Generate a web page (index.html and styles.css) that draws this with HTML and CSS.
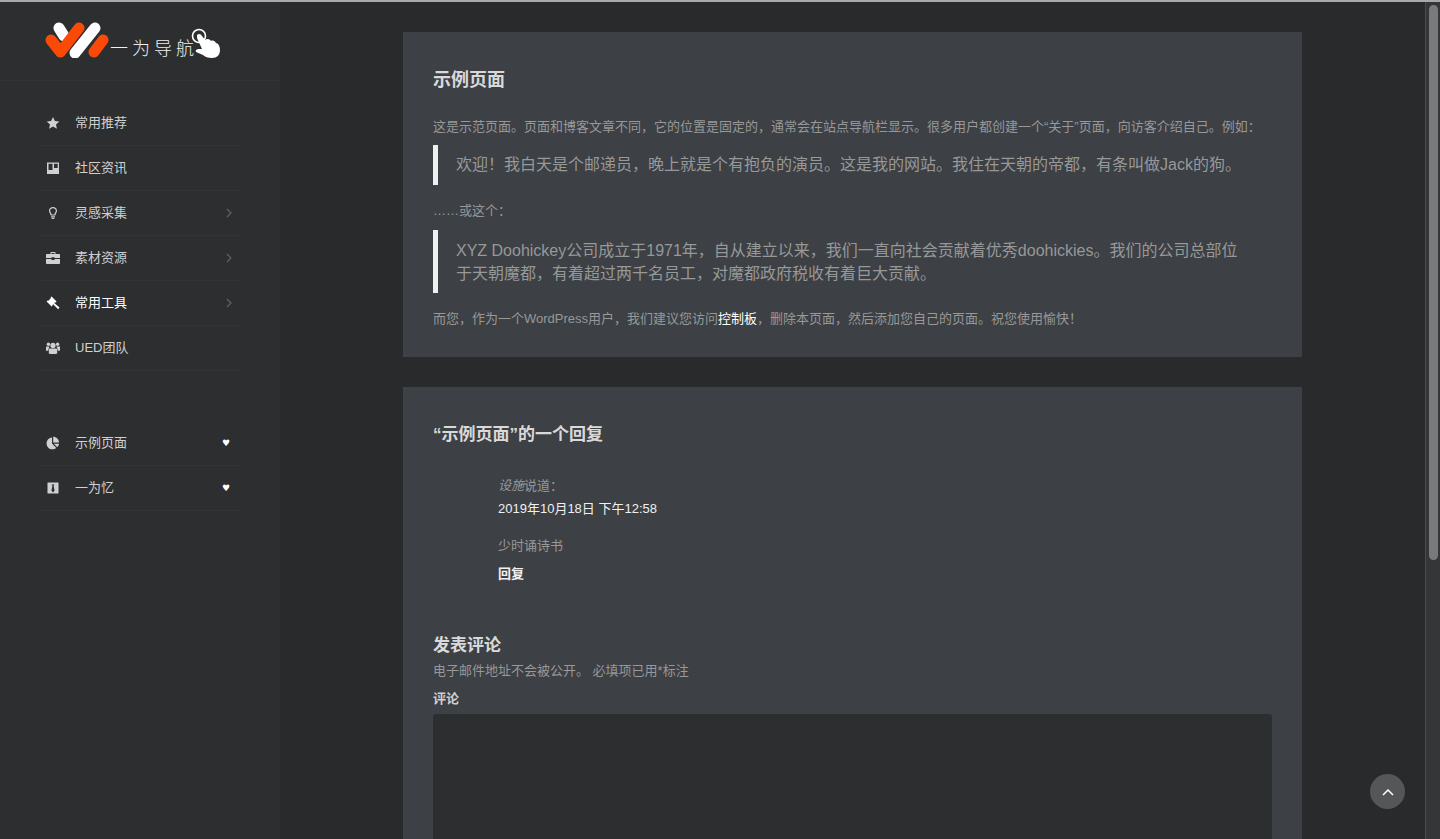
FILE: index.html
```html
<!DOCTYPE html>
<html lang="zh-CN">
<head>
    <meta charset="UTF-8">
    <meta name="viewport" content="width=device-width, initial-scale=1.0">
    <title>示例页面 - 一为导航</title>
    <link rel="stylesheet" href="styles.css">
</head>
<body>
    <div class="top-line"></div>
    <div class="page">
        <aside class="sidebar">
            <div class="logo">
                <svg class="logo-mark" viewBox="0 0 64 36" width="64" height="36">
                    <path class="logo-white" d="M14 6 L19 14"/>
                    <path class="logo-orange" d="M6 18 L15.5 30 L34 6"/>
                    <path class="logo-white" d="M30 31 L50 6"/>
                    <path class="logo-orange" d="M49 30 L58 18"/>
                </svg>
                <span class="logo-text">一为导航</span>
                <svg class="logo-hand" viewBox="0 0 32 32" width="32" height="32">
                    <circle class="hand-ring" cx="9" cy="8" r="6.5"/>
                    <path d="M7 7 C9 5 11 6 12 8 L15 12 C17 10 20 11 21 13 C23 12 25 13 26 15 C28 15 30 18 30 22 C30 27 27 30 22 30 C18 30 15 29 13 27 L6 24 C5 22 7 21 9 21 L12 21 L7 10 Z"/>
                </svg>
            </div>
            <ul class="nav">
                <li class="nav-item">
                    <svg class="nav-icon" viewBox="0 0 14 14"><path d="M7 1 L8.9 5 L13.3 5.5 L10 8.4 L10.9 12.8 L7 10.6 L3.1 12.8 L4 8.4 L.7 5.5 L5.1 5 Z"/></svg>
                    <span class="nav-label">常用推荐</span>
                </li>
                <li class="nav-item">
                    <svg class="nav-icon" viewBox="0 0 14 14"><path fill-rule="evenodd" d="M1 1.5 H13 V13 H1 Z M2.5 2.8 V9 H6.5 V2.8 Z M8 2.8 V7 H11.7 V2.8 Z"/></svg>
                    <span class="nav-label">社区资讯</span>
                </li>
                <li class="nav-item">
                    <svg class="nav-icon" viewBox="0 0 14 14"><path fill-rule="evenodd" d="M7 1 C9.6 1 11 2.8 11 4.8 C11 6.6 9.7 7.5 9.3 9.6 H4.7 C4.3 7.5 3 6.6 3 4.8 C3 2.8 4.4 1 7 1 Z M7 2.2 C5.2 2.2 4.2 3.4 4.2 4.8 C4.2 6 5.2 6.9 5.7 8.5 H8.3 C8.8 6.9 9.8 6 9.8 4.8 C9.8 3.4 8.8 2.2 7 2.2 Z M5 10.3 H9 V11.5 H5 Z M5.7 12 H8.3 V13 H5.7 Z"/></svg>
                    <span class="nav-label">灵感采集</span>
                    <svg class="nav-arrow" viewBox="0 0 6 10" width="6" height="10"><path d="M1 1 L5 5 L1 9"/></svg>
                </li>
                <li class="nav-item">
                    <svg class="nav-icon" viewBox="0 0 14 14"><path fill-rule="evenodd" d="M4.5 3 V1.8 C4.5 1.3 4.9 1 5.3 1 H8.7 C9.1 1 9.5 1.3 9.5 1.8 V3 H13 C13.5 3 14 3.4 14 4 V7 H8.5 V6.2 H5.5 V7 H0 V4 C0 3.4 .5 3 1 3 Z M5.5 3 H8.5 V2 H5.5 Z M0 8 H5.5 V9 H8.5 V8 H14 V12 C14 12.6 13.5 13 13 13 H1 C.5 13 0 12.6 0 12 Z"/></svg>
                    <span class="nav-label">素材资源</span>
                    <svg class="nav-arrow" viewBox="0 0 6 10" width="6" height="10"><path d="M1 1 L5 5 L1 9"/></svg>
                </li>
                <li class="nav-item is-active">
                    <svg class="nav-icon" viewBox="0 0 14 14"><path d="M5.6 .6 L6.6 1.6 L10.6 5.6 L9.6 6.6 L8.9 6.4 L8.2 7.1 L13.5 11.4 L12.2 13.2 L7.1 8.2 L6.4 8.9 L6.6 9.6 L5.6 10.6 L.6 5.6 L1.6 4.6 L2.3 4.8 L4.8 2.3 L4.6 1.6 Z"/></svg>
                    <span class="nav-label">常用工具</span>
                    <svg class="nav-arrow" viewBox="0 0 6 10" width="6" height="10"><path d="M1 1 L5 5 L1 9"/></svg>
                </li>
                <li class="nav-item">
                    <svg class="nav-icon" viewBox="0 0 14 14"><circle cx="7" cy="4.4" r="2.6"/><circle cx="2.4" cy="3.2" r="1.7"/><circle cx="11.6" cy="3.2" r="1.7"/><path d="M3.6 7.6 H10.4 C11 7.6 11.2 8.6 11.2 9.6 V12.4 C10 13.2 4 13.2 2.8 12.4 V9.6 C2.8 8.6 3 7.6 3.6 7.6 Z M0 5.6 H3.4 L2 9.8 H0 Z M14 5.6 H10.6 L12 9.8 H14 Z"/></svg>
                    <span class="nav-label">UED团队</span>
                </li>
            </ul>
            <ul class="nav nav-second">
                <li class="nav-item">
                    <svg class="nav-icon" viewBox="0 0 14 14"><path d="M6 1.6 V7.6 L10.3 11.9 C9.2 12.8 7.8 13.3 6.4 13.3 C3.2 13.3 .6 10.7 .6 7.4 C.6 4.4 3 1.8 6 1.6 Z M7.2 .8 C10.4 .8 13 3.4 13 6.6 H7.2 Z M7.8 7.8 H13 C12.8 9 12.3 10.2 11.3 11.2 Z"/></svg>
                    <span class="nav-label">示例页面</span>
                    <span class="nav-heart">♥</span>
                </li>
                <li class="nav-item">
                    <svg class="nav-icon" viewBox="0 0 14 14"><path fill-rule="evenodd" d="M1.5 1.5 H12.5 V12.5 H1.5 Z M5.6 3.4 L6.4 5 L5.4 9.6 L7 11.4 L8.6 9.6 L7.6 5 L8.4 3.4 Z"/></svg>
                    <span class="nav-label">一为忆</span>
                    <span class="nav-heart">♥</span>
                </li>
            </ul>
        </aside>

        <main class="main">
            <section class="card">
                <h1 class="card-title">示例页面</h1>
                <p class="lead">这是示范页面。页面和博客文章不同，它的位置是固定的，通常会在站点导航栏显示。很多用户都创建一个“关于”页面，向访客介绍自己。例如：</p>
                <blockquote>欢迎！我白天是个邮递员，晚上就是个有抱负的演员。这是我的网站。我住在天朝的帝都，有条叫做Jack的狗。</blockquote>
                <p>……或这个：</p>
                <blockquote>XYZ Doohickey公司成立于1971年，自从建立以来，我们一直向社会贡献着优秀doohickies。我们的公司总部位于天朝魔都，有着超过两千名员工，对魔都政府税收有着巨大贡献。</blockquote>
                <p class="last">而您，作为一个WordPress用户，我们建议您访问<a class="link" href="#">控制板</a>，删除本页面，然后添加您自己的页面。祝您使用愉快！</p>
            </section>

            <section class="card">
                <h2 class="card-title card-title-small">“示例页面”的一个回复</h2>
                <div class="comment">
                    <div class="comment-author"><em>设施</em>说道：</div>
                    <div class="comment-date">2019年10月18日 下午12:58</div>
                    <div class="comment-text">少时诵诗书</div>
                    <a class="comment-reply" href="#">回复</a>
                </div>
                <h3 class="form-title">发表评论</h3>
                <div class="form-note">电子邮件地址不会被公开。 必填项已用*标注</div>
                <label class="form-label">评论</label>
                <div class="form-textarea"></div>
            </section>
        </main>

        <div class="scrollbar"><div class="scrollbar-thumb"></div></div>
    </div>

    <a class="back-top" href="#">
        <svg viewBox="0 0 12 8" width="12" height="8"><path d="M1 7 L6 2 L11 7"/></svg>
    </a>
</body>
</html>
```

FILE: styles.css
```css
* {
    box-sizing: border-box;
}
html, body {
    height: 100%;
}
body {
    margin: 0;
    overflow: hidden;
    display: flex;
    flex-direction: column;
    background: #282a2b;
    color: #979898;
    font-family: "Liberation Sans", "Noto Sans CJK SC", sans-serif;
    font-size: 13px;
    line-height: 18.57px;
}
a {
    text-decoration: none;
}
.top-line {
    height: 2px;
    flex: none;
    background: #a9a9a9;
}
.page {
    flex: 1;
    min-height: 0;
    display: flex;
}

/* sidebar */
.sidebar {
    width: 280px;
    flex: none;
    background: #2c2e2f;
}
.logo {
    height: 79px;
    display: flex;
    align-items: flex-start;
    padding: 20px 0 0 45px;
    border-bottom: 1px solid #313334;
}
.logo-mark {
    flex: none;
}
.logo-mark path {
    fill: none;
    stroke-width: 11;
    stroke-linecap: round;
    stroke-linejoin: round;
}
.logo-orange {
    stroke: #fb4a07;
}
.logo-white {
    stroke: #fff;
}
.logo-text {
    color: #f0f0f0;
    font-size: 18px;
    font-weight: 300;
    letter-spacing: 4px;
    line-height: 24px;
    margin: 15px 0 0 1px;
    white-space: nowrap;
}
.logo-hand {
    flex: none;
    fill: #fff;
    margin: 6px 0 0 -8px;
}
.hand-ring {
    fill: none;
    stroke: #fff;
    stroke-width: 1.6;
}
.nav {
    list-style: none;
    margin: 0;
    padding: 20px 40px 0;
}
.nav-second {
    padding-top: 50px;
}
.nav-item {
    height: 45px;
    display: flex;
    align-items: center;
    padding-left: 6px;
    border-bottom: 1px solid #313334;
    color: #d0d0d0;
}
.nav-item.is-active {
    color: #fff;
}
.nav-icon {
    width: 14px;
    height: 14px;
    flex: none;
    fill: currentColor;
    margin-right: 15px;
}
.nav-label {
    flex: 1;
}
.nav-arrow {
    fill: none;
    stroke: #5f6162;
    stroke-width: 1.2;
    margin-right: 8px;
}
.nav-heart {
    color: #fff;
    font-family: "DejaVu Sans", sans-serif;
    font-size: 9px;
    margin-right: 10px;
}

/* content */
.main {
    flex: 1;
    min-width: 0;
    padding: 30px 123px 0;
}
.card {
    background: #3d4045;
    padding: 30px 30px 28px;
    margin-bottom: 30px;
}
.card-title {
    margin: 0 0 19px;
    color: #d9d9d9;
    font-size: 18px;
    font-weight: bold;
    line-height: 37px;
}
.card-title-small {
    margin-bottom: 22px;
    font-size: 17px;
    line-height: 35px;
}
.card p {
    margin: 0 0 10px;
}
.card p.lead {
    margin-bottom: 8px;
}
.card p.last {
    margin-bottom: 0;
}
blockquote {
    margin: 0 0 17px;
    padding: 8.5px 30px 8.5px 18px;
    border-left: 5px solid #f0f0f0;
    font-size: 16px;
    line-height: 23px;
}
.link {
    color: #fff;
}
.comment {
    margin: 0 0 0 65px;
}
.comment-author {
    padding-top: 3px;
}
.comment-date {
    margin-top: 5px;
    color: #f0f0f0;
}
.comment-text {
    margin-top: 18px;
}
.comment-reply {
    display: block;
    margin-top: 10px;
    color: #f0f0f0;
    font-weight: bold;
}
.form-title {
    margin: 50px 0 0;
    color: #d9d9d9;
    font-size: 17px;
    font-weight: bold;
    line-height: 24px;
}
.form-note {
    margin-top: 4px;
}
.form-label {
    display: block;
    margin-top: 9px;
    color: #d0d0d0;
    font-weight: bold;
}
.form-textarea {
    height: 200px;
    margin-top: 6px;
    background: #2c2e2f;
    border-radius: 3px;
}

/* scrollbar and back to top */
.scrollbar {
    width: 15px;
    flex: none;
    background: #343637;
    border-left: 1px solid #4a4c4d;
    padding: 3px 2px 0 3px;
}
.scrollbar-thumb {
    height: 555px;
    background: #7a7a7a;
    border-radius: 5px;
}
.back-top {
    position: fixed;
    left: 1370px;
    top: 774px;
    width: 35px;
    height: 35px;
    display: flex;
    align-items: center;
    justify-content: center;
    border-radius: 50%;
    background: #555657;
}
.back-top svg {
    fill: none;
    stroke: #fff;
    stroke-width: 1.5;
}
```
